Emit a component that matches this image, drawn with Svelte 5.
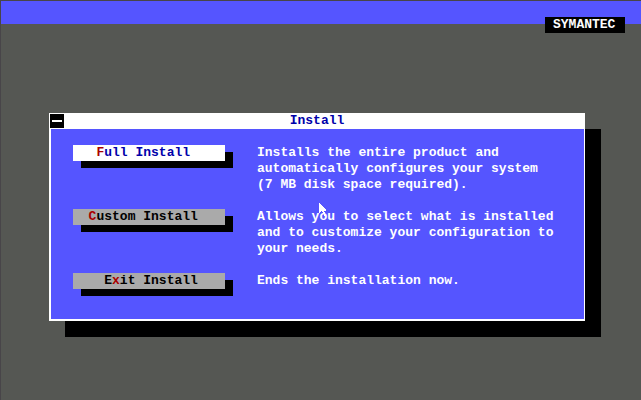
<script>
  const options = [
    {
      before: '   ',
      key: 'F',
      after: 'ull Install',
      lines: ['Installs the entire product and', 'automatically configures your system', '(7 MB disk space required).'],
    },
    {
      before: '  ',
      key: 'C',
      after: 'ustom Install',
      lines: ['Allows you to select what is installed', 'and to customize your configuration to', 'your needs.'],
    },
    {
      before: '    E',
      key: 'x',
      after: 'it Install',
      lines: ['Ends the installation now.'],
    },
  ];

  let selected = 0;
</script>

<div class="screen">
  <header class="menubar">
    <span class="brand">SYMANTEC</span>
  </header>

  <main class="dialog">
    <div class="titlebar">
      <button class="close" aria-label="Close"></button>
      <h1>Install</h1>
    </div>

    <div class="options">
      {#each options as { before, key, after, lines }, i}
        <button
          class="option"
          class:selected={selected === i}
          aria-describedby="desc-{i}"
          on:click={() => (selected = i)}
        >{before}<span class="key">{key}</span>{after}</button>
        <p id="desc-{i}">
          {#each lines as line}
            <span class="line">{line}</span>
          {/each}
        </p>
      {/each}
    </div>
  </main>

  <svg class="pointer" width="8" height="13" viewBox="0 0 8 13" shape-rendering="crispEdges" aria-hidden="true">
    <path fill="#fff" d="M0 0h1v1h1v1h1v1h1v1h1v1h1v1h1v2h-2v1h1v2h1v2h-2v-2h-1v-2h-1v-1h-1v1h-1v1h-1z" />
  </svg>
</div>

<style>
  :global(body) {
    background: #555753;
  }

  .screen {
    box-sizing: border-box;
    min-height: 100vh;
    border: 1px solid #484549;
    border-width: 1px 0 0 1px;
    background: #555753;
    font: bold 13px/16px "Liberation Mono", monospace;
  }

  .menubar {
    display: flex;
    justify-content: flex-end;
    align-items: flex-start;
    height: 23px;
    padding: 16px 16px 0 0;
    box-sizing: border-box;
    background: #5555ff;
  }

  .brand {
    min-width: 64px;
    padding: 0 8px;
    background: #000;
    color: #fff;
  }

  .dialog {
    margin: 89px 56px 0 48px;
    background: #5555ff;
    border: solid #fff;
    border-width: 0 1px 2px 2px;
    box-shadow: 16px 16px 0 #000;
    color: #fff;
  }

  .titlebar {
    display: grid;
    grid-template-columns: 14px 1fr 14px;
    align-items: center;
    height: 16px;
    margin-left: -1px;
    background: #fff;
    color: #0000aa;
  }

  h1 {
    margin: 0;
    font: inherit;
    text-align: center;
  }

  .close {
    display: flex;
    align-items: center;
    justify-content: center;
    width: 14px;
    height: 14px;
    padding: 0;
    border: 0;
    background: #000;
  }

  .close::before {
    content: "";
    width: 10px;
    height: 2px;
    background: #fff;
  }

  .options {
    display: grid;
    grid-template-columns: 152px 1fr;
    gap: 16px 32px;
    align-items: start;
    padding: 16px 16px 30px 22px;
  }

  .option {
    height: 16px;
    padding: 0;
    border: 0;
    background: #aaa;
    box-shadow: 8px 7px 0 #000;
    color: #000;
    font: inherit;
    text-align: left;
    white-space: pre;
  }

  .option.selected {
    background: #fff;
    color: #0000aa;
  }

  .key {
    color: #aa0000;
  }

  p {
    margin: 0;
  }

  .line {
    display: block;
  }

  .pointer {
    position: absolute;
    left: 319px;
    top: 203px;
  }
</style>
